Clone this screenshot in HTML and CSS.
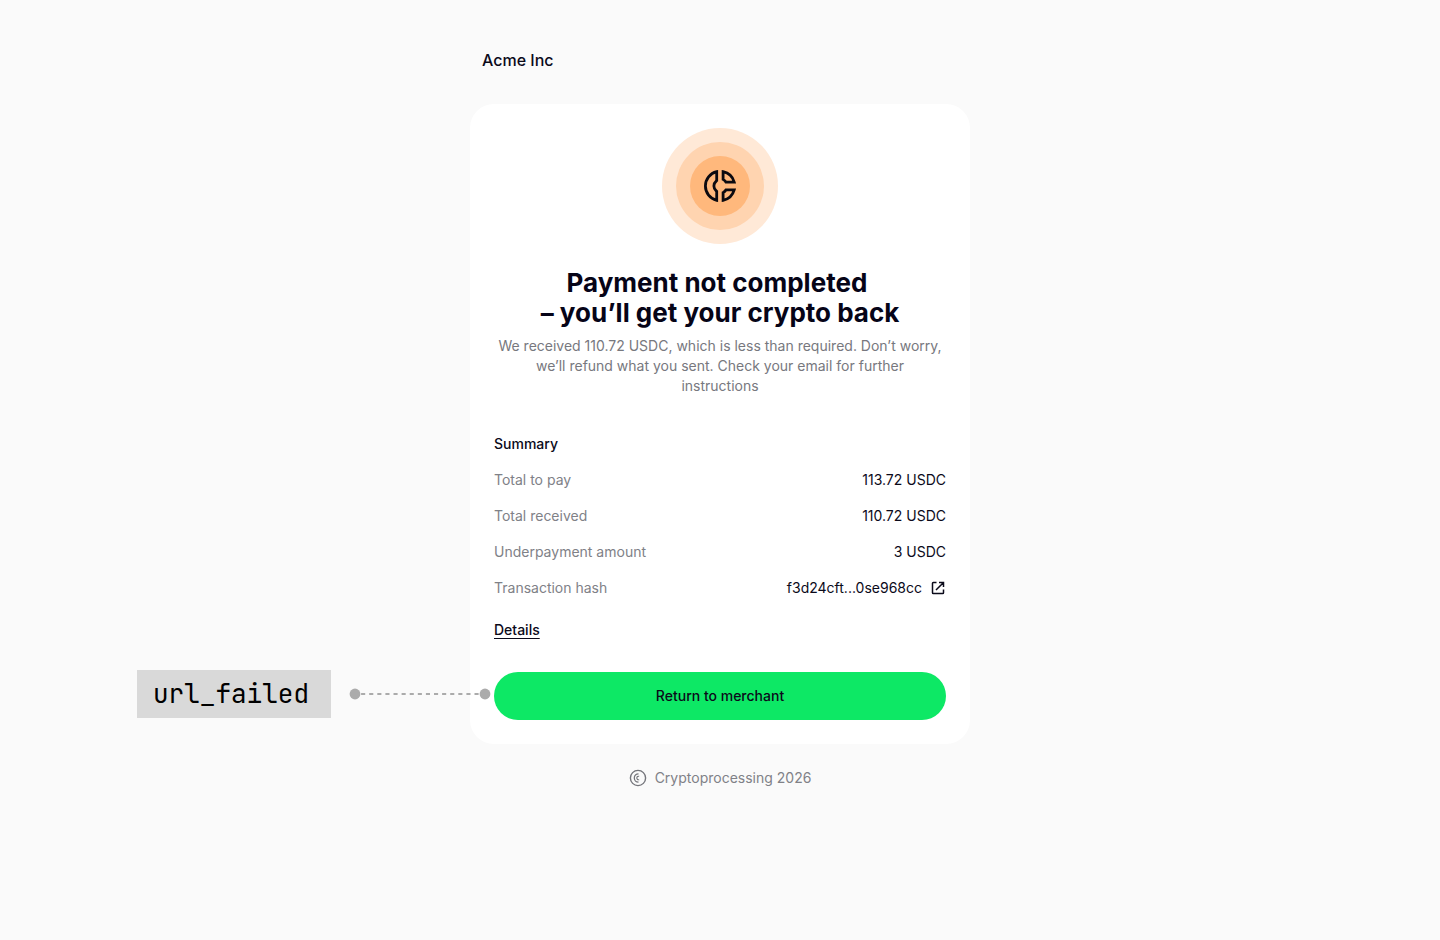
FILE: index.html
```html
<!DOCTYPE html>
<html lang="en">
<head>
<meta charset="utf-8">
<meta name="viewport" content="width=device-width, initial-scale=1">
<title>Payment not completed</title>
<link rel="stylesheet" href="styles.css">
</head>
<body>
<div class="page">
  <header class="merchant">Acme Inc</header>
  <main class="card">
    <div class="status">
      <svg class="status-icon" viewBox="0 0 116 116" aria-hidden="true">
        <circle cx="58" cy="58" r="58" fill="#ffe9d7"/>
        <circle cx="58" cy="58" r="44" fill="#ffd4b0"/>
        <circle cx="58" cy="58" r="30" fill="#ffb87c"/>
        <g transform="translate(38 38)" fill="none" stroke="#0c0a10" stroke-width="2.8">
          <path d="M16.7 5.7A14.7 14.7 0 0 0 16.7 34.3V25.4C16 24.6 13.9 23.6 13.9 20S16 15.4 16.7 14.6Z"/>
          <path d="M23.1 5.7A14.7 14.7 0 0 1 34.2 16.1H26C25.2 14.9 24.4 14.2 23.1 13.4Z"/>
          <path d="M23.1 34.3A14.7 14.7 0 0 0 34.2 23.9H26C25.2 25.1 24.4 25.8 23.1 26.6Z"/>
        </g>
      </svg>
      <h1 class="title">Payment not completed&nbsp;<br>– you’ll get your crypto back</h1>
      <p class="message">We received 110.72 USDC, which is less than required. Don’t worry, we’ll refund what you sent. Check your email for further<br>instructions</p>
    </div>
    <section class="summary">
      <h2 class="summary-title">Summary</h2>
      <dl class="rows">
        <div class="row"><dt>Total to pay</dt><dd>113.72 USDC</dd></div>
        <div class="row"><dt>Total received</dt><dd>110.72 USDC</dd></div>
        <div class="row"><dt>Underpayment amount</dt><dd>3 USDC</dd></div>
        <div class="row"><dt>Transaction hash</dt>
          <dd><a class="hash" href="#transaction">f3d24cft...0se968cc
            <svg class="hash-icon" viewBox="0 0 16 16" aria-hidden="true"><path d="M6.5 2.5H3.3a.8.8 0 0 0-.8.8v9.4c0 .4.4.8.8.8h9.4c.4 0 .8-.4.8-.8V9.5M9 2.5H13.5V7M13.3 2.7L6 10"/></svg>
          </a></dd>
        </div>
      </dl>
      <a class="details" href="#details">Details</a>
    </section>
    <div class="action">
      <button class="return" type="button">Return to merchant</button>
      <div class="callout">
        <code class="callout-label">url_failed</code>
        <svg class="callout-line" viewBox="0 0 142 12" aria-hidden="true">
          <path d="M6 6H136" stroke="#ababab" stroke-width="2" stroke-dasharray="4.1 4" stroke-dashoffset="2"/>
          <circle cx="6" cy="6" r="5.4" fill="#ababab"/>
          <circle cx="136" cy="6" r="5.4" fill="#ababab"/>
        </svg>
      </div>
    </div>
  </main>
  <footer class="footer">
    <svg class="footer-icon" viewBox="0 0 18 18" aria-hidden="true" fill="none" stroke="#74757b">
      <circle cx="9" cy="9" r="7.6" stroke-width="1.4"/>
      <path d="M9.5 4.8A4.2 4.2 0 1 0 9.5 13.2" stroke-width="1.3"/>
      <path d="M10.2 7.3A1.8 1.8 0 1 0 10.2 10.7" stroke-width="1.1"/>
    </svg>
    <span>Cryptoprocessing 2026</span>
  </footer>
</div>
</body>
</html>
```
FILE: styles.css
```css
* { box-sizing: border-box; margin: 0; padding: 0; }

body {
  background: #fafafa;
  color: #0b0a1a;
  font: 400 14px/20px Inter, "Liberation Sans", sans-serif;
}

.page {
  max-width: 500px;
  margin: 0 auto;
  padding: 48px 0;
}

.merchant {
  padding: 0 12px;
  font-size: 16px;
  font-weight: 500;
  line-height: 24px;
}

.card {
  margin-top: 32px;
  padding: 24px;
  border-radius: 24px;
  background: #fff;
}

.status { text-align: center; }
.status-icon { display: block; width: 116px; height: 116px; margin: 0 auto 24px; }
.title { color: #060417; font-size: 26px; font-weight: 700; line-height: 30px; }
.message { margin-top: 8px; color: #77787e; }

.summary { margin-top: 38px; }
.summary-title { font-size: 14px; font-weight: 500; line-height: 20px; }
.rows { display: grid; gap: 16px; margin-top: 16px; }
.row { display: flex; justify-content: space-between; }
.row dt { color: #808187; }
.hash { display: flex; align-items: center; gap: 8px; color: inherit; text-decoration: none; }
.hash-icon { width: 16px; height: 16px; fill: none; stroke: #0b0a1a; stroke-width: 1.5; }

.details {
  display: inline-block;
  margin-top: 22px;
  color: inherit;
  font-weight: 500;
  text-underline-offset: 3px;
}

.action { position: relative; margin-top: 32px; }
.return {
  display: block;
  width: 100%;
  height: 48px;
  border: 0;
  border-radius: 24px;
  background: #0de865;
  color: #0b0a1a;
  font: inherit;
  font-weight: 500;
}

.callout {
  position: absolute;
  right: 100%;
  top: -2px;
  display: flex;
  align-items: center;
  gap: 18px;
  margin-right: 3px;
}
.callout-label {
  padding: 0 22px 0 16px;
  background: #d9d9d9;
  color: #000;
  font: 26px/48px "JetBrains Mono", "DejaVu Sans Mono", monospace;
}
.callout-line { flex: none; width: 142px; height: 12px; fill: none; }

.footer {
  display: flex;
  align-items: center;
  justify-content: center;
  gap: 8px;
  margin-top: 24px;
  color: #808187;
}
.footer-icon { width: 18px; height: 18px; }
```
